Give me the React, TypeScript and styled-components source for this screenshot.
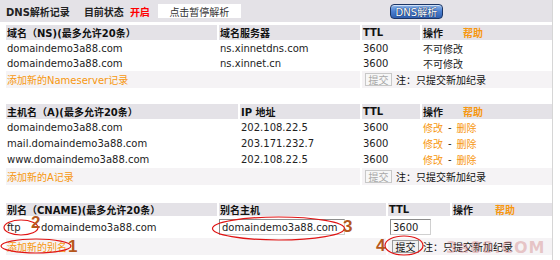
import styled, { createGlobalStyle } from "styled-components";

const GlobalStyle = createGlobalStyle`
  body {
    margin: 0;
    background: #fff;
    font-family: "DejaVu Sans", "Noto Sans CJK SC", sans-serif;
    font-size: 10px;
    color: #222;
  }
`;

const ORANGE = "#f7970f";
const HEAD_BG = "#e4e2e7";
const ADD_BG = "#f5f3f5";

const Frame = styled.div`
  position: relative;
  width: 552px;
  height: 260px;
  border-right: 1px solid #d6d6d6;
  overflow: hidden;
`;

const TopBar = styled.div`
  display: flex;
  align-items: center;
  height: 22px;
  padding-left: 6px;
  background: ${HEAD_BG};
  font-weight: bold;
`;

const StatusLabel = styled.span`
  margin-left: 14px;
`;

const StatusOn = styled.span`
  margin-left: 6px;
  color: #f00;
`;

const PauseButton = styled.span`
  margin-left: 8px;
  width: 83px;
  height: 14px;
  display: flex;
  align-items: center;
  justify-content: center;
  background: #fff;
  font-weight: normal;
  color: #333;
`;

const DnsButton = styled.span`
  margin-left: 149px;
  width: 53px;
  height: 15px;
  box-sizing: border-box;
  display: flex;
  align-items: center;
  justify-content: center;
  border: 1px solid #1b3566;
  border-radius: 4px;
  background: linear-gradient(#8fb7ea, #4a7ed0 50%, #2f5eae);
  box-shadow: inset 0 1px 0 rgba(255, 255, 255, 0.6);
  color: #fff;
  font-weight: normal;
  text-shadow: 0 0 1px #0d2450, 0 0 1px #0d2450;
`;

const Grid = styled.div<{ $cols: string; $rows: string; $top: number }>`
  display: grid;
  grid-template-columns: ${(p) => p.$cols};
  grid-template-rows: ${(p) => p.$rows};
  column-gap: 2px;
  row-gap: 1px;
  margin: ${(p) => p.$top}px 0 0 6px;
`;

const Head = styled.div`
  display: flex;
  align-items: center;
  padding-left: 1px;
  background: ${HEAD_BG};
  font-weight: bold;
  color: #111;
`;

const Help = styled.span<{ $gap: number }>`
  margin-left: ${(p) => p.$gap}px;
  color: ${ORANGE};
`;

const Cell = styled.div<{ $pad?: number }>`
  display: flex;
  align-items: center;
  padding-left: ${(p) => p.$pad ?? 1}px;
`;

const AddCell = styled.div<{ $span: string; $pad?: number }>`
  grid-column: ${(p) => p.$span};
  display: flex;
  align-items: center;
  padding-left: ${(p) => p.$pad ?? 1}px;
  background: ${ADD_BG};
`;

const AddLink = styled.span`
  color: ${ORANGE};
`;

const Link = styled.span`
  color: ${ORANGE};
`;

const Dash = styled.span`
  margin: 0 5px;
`;

const SubmitButton = styled.span<{ $disabled?: boolean }>`
  display: flex;
  align-items: center;
  justify-content: center;
  box-sizing: border-box;
  width: 27px;
  height: 13px;
  border: 1px solid ${(p) => (p.$disabled ? "#c8c8c8" : "#9a9a9a")};
  background: ${(p) => (p.$disabled ? "#f7f7f7" : "#f0f0f0")};
  color: ${(p) => (p.$disabled ? "#a8a8a8" : "#111")};
`;

const Note = styled.span`
  margin-left: 4px;
  color: #111;
`;

const Alias = styled.span`
  width: 34px;
`;

const Field = styled.span<{ $width: number }>`
  display: flex;
  align-items: center;
  box-sizing: border-box;
  width: ${(p) => p.$width}px;
  height: 16px;
  padding-left: 2px;
  border: 1px solid #a9a9a9;
  border-color: #8d8d8d #d0d0d0 #d0d0d0 #8d8d8d;
  background: #fff;
`;

const Marks = styled.svg`
  position: absolute;
  left: 0;
  top: 0;
  pointer-events: none;
`;

const Num = styled.span<{ $x: number; $y: number }>`
  position: absolute;
  left: ${(p) => p.$x}px;
  top: ${(p) => p.$y}px;
  font-family: "Liberation Sans", sans-serif;
  font-weight: bold;
  font-size: 17px;
  line-height: 17px;
  color: #b5571c;
`;

const Watermark = styled.span`
  position: absolute;
  left: 446px;
  top: 240px;
  font-family: "DejaVu Sans", sans-serif;
  font-weight: bold;
  font-size: 16px;
  line-height: 16px;
  letter-spacing: 1px;
  color: rgba(205, 120, 120, 0.38);
  pointer-events: none;
`;

const domain = "domaindemo3a88.com";

const Edit = () => (
  <Cell>
    <Link>修改</Link>
    <Dash>-</Dash>
    <Link>删除</Link>
  </Cell>
);

const AddRow = ({ label, pad }: { label: string; pad: number }) => (
  <>
    <AddCell $span="1 / 3">
      <AddLink>{label}</AddLink>
    </AddCell>
    <AddCell $span="3 / 5" $pad={pad}>
      <SubmitButton $disabled={pad === 3}>提交</SubmitButton>
      <Note>注：只提交新加纪录</Note>
    </AddCell>
  </>
);

export default function App() {
  return (
    <Frame>
      <GlobalStyle />
      <TopBar>
        <span>DNS解析记录</span>
        <StatusLabel>目前状态</StatusLabel>
        <StatusOn>开启</StatusOn>
        <PauseButton>点击暂停解析</PauseButton>
        <DnsButton>DNS解析</DnsButton>
      </TopBar>

      <Grid $cols="211px 141px 58px 1fr" $rows="15px 14px 14px 17px" $top={3}>
        <Head>域名（NS)(最多允许20条）</Head>
        <Head>域名服务器</Head>
        <Head>TTL</Head>
        <Head>
          操作<Help $gap={20}>帮助</Help>
        </Head>
        <Cell>{domain}</Cell>
        <Cell>ns.xinnetdns.com</Cell>
        <Cell>3600</Cell>
        <Cell>不可修改</Cell>
        <Cell>{domain}</Cell>
        <Cell>ns.xinnet.cn</Cell>
        <Cell>3600</Cell>
        <Cell>不可修改</Cell>
        <AddRow label="添加新的Nameserver记录" pad={3} />
      </Grid>

      <Grid $cols="232px 120px 58px 1fr" $rows="15px 15px 15px 15px 17px" $top={16}>
        <Head>主机名（A)(最多允许20条）</Head>
        <Head>IP 地址</Head>
        <Head>TTL</Head>
        <Head>
          操作<Help $gap={20}>帮助</Help>
        </Head>
        <Cell>{domain}</Cell>
        <Cell>202.108.22.5</Cell>
        <Cell>3600</Cell>
        <Edit />
        <Cell>mail.{domain}</Cell>
        <Cell>203.171.232.7</Cell>
        <Cell>3600</Cell>
        <Edit />
        <Cell>www.{domain}</Cell>
        <Cell>202.108.22.5</Cell>
        <Cell>3600</Cell>
        <Edit />
        <AddRow label="添加新的A记录" pad={3} />
      </Grid>

      <Grid $cols="211px 167px 62px 1fr" $rows="13px 20px 17px" $top={18}>
        <Head>别名（CNAME)(最多允许20条）</Head>
        <Head>别名主机</Head>
        <Head>TTL</Head>
        <Head>
          操作<Help $gap={22}>帮助</Help>
        </Head>
        <Cell>
          <Alias>ftp</Alias>
          {domain}
        </Cell>
        <Cell $pad={0}>
          <Field $width={126}>{domain}</Field>
        </Cell>
        <Cell $pad={2}>
          <Field $width={41}>3600</Field>
        </Cell>
        <Cell />
        <AddRow label="添加新的别名" pad={4} />
      </Grid>

      <Watermark>3a88.COM</Watermark>
      <Marks width={560} height={260}>
        <g fill="none" stroke="#e01414" strokeWidth={1.2}>
          <ellipse cx={36} cy={246} rx={35} ry={7} />
          <ellipse cx={21} cy={227.5} rx={17} ry={7.5} />
          <ellipse cx={278.5} cy={228.5} rx={66} ry={11.5} />
          <ellipse cx={404} cy={245.5} rx={19} ry={9.5} />
        </g>
      </Marks>
      <Num $x={68} $y={238}>1</Num>
      <Num $x={31} $y={214}>2</Num>
      <Num $x={343} $y={218}>3</Num>
      <Num $x={376} $y={237}>4</Num>
    </Frame>
  );
}
